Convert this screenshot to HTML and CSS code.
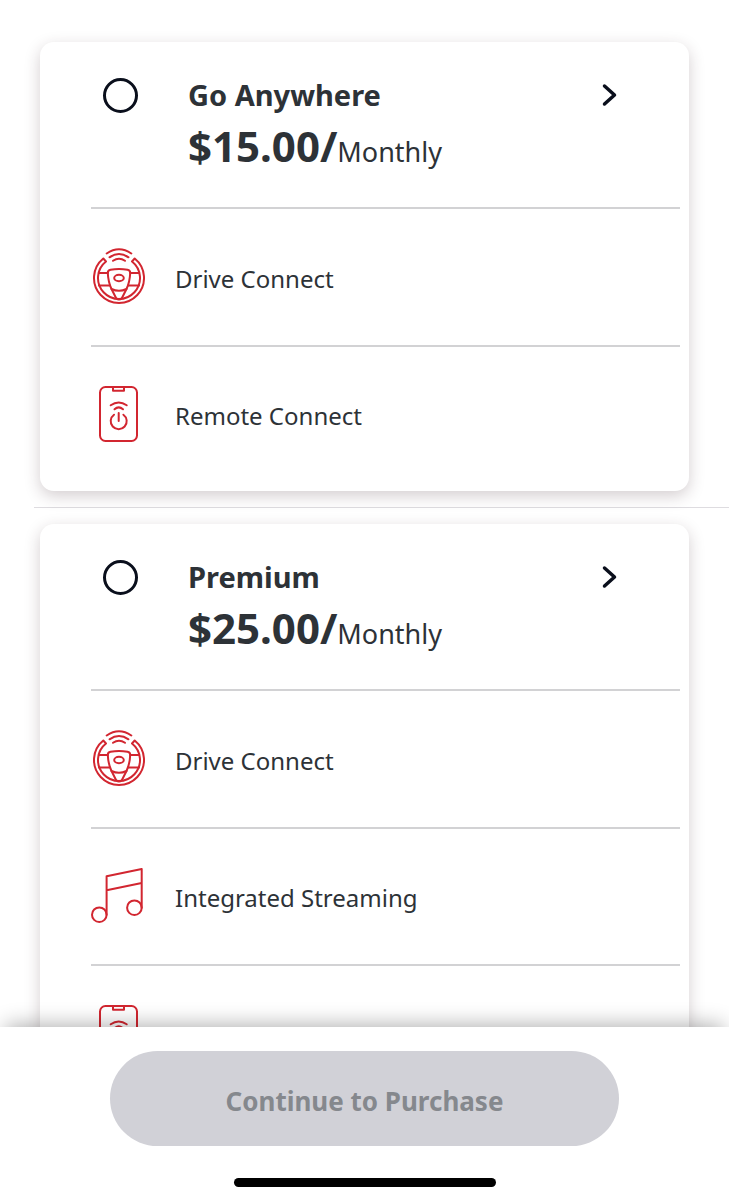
FILE: index.html
```html
<!DOCTYPE html>
<html lang="en">
<head>
  <meta charset="UTF-8" />
  <meta name="viewport" content="width=device-width, initial-scale=1.0" />
  <title>Choose a Plan</title>
  <link rel="stylesheet" href="styles.css">
</head>
<body>
  <!-- shared icons -->
  <svg class="sprite" aria-hidden="true">
    <symbol id="wheel" viewBox="0 0 54 56">
      <path d="M12.300 10.500 A25 25 0 1 0 43.700 10.500 L41 13.500 A21 21 0 1 1 15 13.500 Z" />
      <path d="M15.700 5.500 Q28 -3 40.300 5.500" />
      <path d="M18.500 9.300 Q28 2.800 37.500 9.300" />
      <path d="M22 12.800 Q28 8.500 34 12.800" />
      <path d="M19.500 21.800 Q28 20.300 36.500 21.800 Q39.300 22.300 39.200 25 Q38.800 34 35.500 41 Q28 44.500 20.500 41 Q17.200 34 16.800 25 Q16.700 22.300 19.500 21.800 Z" />
      <ellipse cx="28" cy="30" rx="4.800" ry="3.200" />
      <path d="M8 25 H16.800 M39.200 25 H48 M8 37.500 H19 M37 37.500 H48" />
      <path d="M20.500 41 L25.300 50.500 Q28 52.500 30.700 50.500 L35.500 41" />
    </symbol>
    <symbol id="phone" viewBox="0 0 54 56">
      <rect x="9" y="1" width="37" height="54" rx="5.500" />
      <path d="M22 1 V4.700 H33 V1" />
      <path d="M19.700 19.300 Q27.700 13.500 35.700 19.300" />
      <path d="M23.500 23.300 Q27.700 19.500 32 23.300" />
      <path d="M23 28.700 A8 8 0 1 0 32.400 28.700 M27.700 27 V35" />
    </symbol>
    <symbol id="music" viewBox="0 0 54 56">
      <circle cx="8.300" cy="46.700" r="7.300" />
      <circle cx="43.400" cy="39.700" r="7.300" />
      <path d="M15.600 46.700 V8.200 L50.700 1 V39.700 M15.600 22.300 L50.700 15" />
    </symbol>
    <symbol id="chevron" viewBox="0 0 16 24">
      <path d="M2.500 3 L12.500 12 L2.500 21" />
    </symbol>
  </svg>

  <main class="plans">
    <ul class="plan-list">
      <li class="plan-item">
        <section class="card">
          <div class="card-header">
            <input type="radio" name="plan" id="goAnywhere" class="plan-radio" />
            <label for="goAnywhere" class="plan-label">
              <span class="plan-name">Go Anywhere</span>
              <span class="plan-price"><strong>$15.00/</strong>Monthly</span>
            </label>
            <button type="button" class="details" aria-label="Go Anywhere details">
              <svg class="chevron"><use href="#chevron" /></svg>
            </button>
          </div>
          <ul class="features">
            <li class="feature"><svg class="icon"><use href="#wheel" /></svg>Drive Connect</li>
            <li class="feature"><svg class="icon"><use href="#phone" /></svg>Remote Connect</li>
          </ul>
        </section>
      </li>
      <li class="plan-item">
        <section class="card">
          <div class="card-header">
            <input type="radio" name="plan" id="premium" class="plan-radio" />
            <label for="premium" class="plan-label">
              <span class="plan-name">Premium</span>
              <span class="plan-price"><strong>$25.00/</strong>Monthly</span>
            </label>
            <button type="button" class="details" aria-label="Premium details">
              <svg class="chevron"><use href="#chevron" /></svg>
            </button>
          </div>
          <ul class="features">
            <li class="feature"><svg class="icon"><use href="#wheel" /></svg>Drive Connect</li>
            <li class="feature"><svg class="icon"><use href="#music" /></svg>Integrated Streaming</li>
            <li class="feature"><svg class="icon" role="img" aria-label="Remote Connect"><use href="#phone" /></svg></li>
          </ul>
        </section>
      </li>
    </ul>
  </main>

  <footer class="footer">
    <button type="button" class="continue" disabled>Continue to Purchase</button>
    <div class="home-bar"></div>
  </footer>
</body>
</html>
```
FILE: styles.css
```css
* {
  box-sizing: border-box;
}
body {
  margin: 0;
  height: 100vh;
  display: flex;
  flex-direction: column;
  background-color: #fff;
  color: #2d3237;
  font-family: "Noto Sans", "Open Sans", sans-serif;
}
ul {
  list-style: none;
  margin: 0;
  padding: 0;
}
.sprite {
  display: none;
}

/* plan cards */
.plans {
  flex: 1;
  min-height: 0;
  overflow-y: auto;
  scrollbar-width: none;
  padding: 26px 0 0 34px;
}
.plan-item {
  padding: 16px 40px 16px 6px;
  border-bottom: 1px solid #dedce0;
}
.card {
  padding: 0 9px 9px 51px;
  border-radius: 14px;
  background-color: #fff;
  box-shadow: 0 5px 16px rgba(60, 30, 40, 0.22);
}
.card-header {
  display: flex;
  align-items: flex-start;
  height: 165px;
  padding: 32px 58px 0 12px;
}
.plan-radio {
  appearance: none;
  flex: none;
  width: 35px;
  height: 35px;
  margin: 4px 50px 0 0;
  border: 3px solid #0a0f1c;
  border-radius: 50%;
}
.plan-radio:checked {
  background: radial-gradient(#0a0f1c 45%, transparent 50%);
}
.plan-label {
  flex: 1;
}
.plan-name,
.plan-price {
  display: block;
}
.plan-name {
  font-size: 29px;
  font-weight: bold;
  line-height: 42px;
}
.plan-price {
  font-size: 27px;
  line-height: 60px;
}
.plan-price strong {
  font-size: 42px;
}
.details {
  display: flex;
  margin-top: 9px;
  padding: 0 4px;
  border: none;
  background: none;
  cursor: pointer;
}
.chevron {
  width: 16px;
  height: 24px;
  fill: none;
  stroke: #0a0f1c;
  stroke-width: 3.5;
  stroke-linecap: round;
  stroke-linejoin: round;
}

/* feature rows */
.feature {
  display: flex;
  align-items: center;
  gap: 30px;
  min-height: 138px;
  padding-top: 2px;
  border-top: 2px solid #d2d2d4;
  font-size: 24px;
}
.features .feature + .feature {
  min-height: 137px;
}
.icon {
  flex: none;
  width: 54px;
  height: 56px;
  margin-bottom: 4px;
  fill: none;
  stroke: #d22630;
  stroke-width: 2;
  stroke-linecap: round;
  stroke-linejoin: round;
}

/* bottom bar */
.footer {
  position: relative;
  display: flex;
  flex-direction: column;
  align-items: center;
  padding: 24px 110px 13px;
  background-color: #fff;
  box-shadow: 0 -8px 20px -6px rgba(0, 0, 0, 0.32);
}
.continue {
  width: 100%;
  height: 95px;
  padding: 4px 0 0;
  border: none;
  border-radius: 48px;
  background-color: #d1d1d7;
  color: #85888d;
  font-family: inherit;
  font-size: 26px;
  font-weight: bold;
}
.home-bar {
  width: 262px;
  max-width: 100%;
  height: 9px;
  margin-top: 32px;
  border-radius: 5px;
  background-color: #000;
}
```
